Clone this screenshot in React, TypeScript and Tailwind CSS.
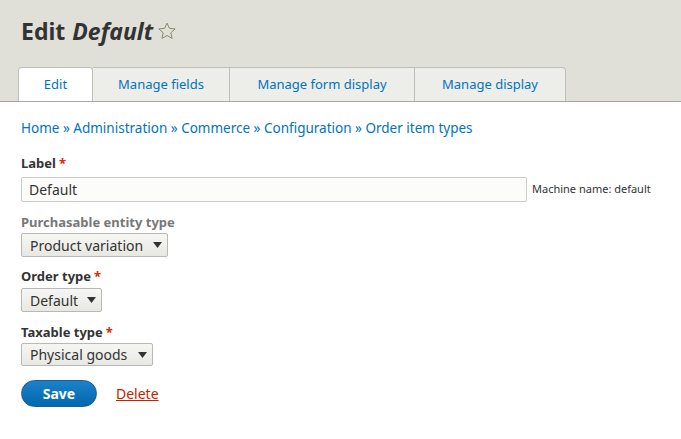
import React from "react";

const font = { fontFamily: '"Noto Sans", "Open Sans", sans-serif' };

function Req() {
  return <span className="text-[#e32700] ml-[3px]">*</span>;
}

function Select({ value, w, h }: { value: string; w: string; h: string }) {
  return (
    <div
      className={`${w} ${h} flex items-center justify-between pl-[8px] pr-[5px] border border-[#b8b8b8] rounded-[2px] bg-gradient-to-b from-[#f6f6f3] to-[#e8e8e3] text-[14px] text-[#333]`}
    >
      <span>{value}</span>
      <svg width="9" height="6" viewBox="0 0 9 6">
        <path d="M0 0h9L4.5 6z" fill="#333" />
      </svg>
    </div>
  );
}

export default function App() {
  return (
    <div className="w-[681px] h-[439px] bg-white text-[#333]" style={font}>
      <div className="bg-[#e0e0d8] pt-[16px] border-b border-[#a6a6a6]">
        <h1 className="pl-[21px] text-[23px] font-bold text-[#333] leading-[30px] flex items-center">
          Edit <em className="ml-[7px]">Default</em>
          <svg width="20" height="20" viewBox="0 0 24 24" className="ml-[4px]">
            <path
              d="M12 2.5l2.9 6.3 6.9.7-5.2 4.6 1.5 6.8L12 17.4l-6.1 3.5 1.5-6.8-5.2-4.6 6.9-.7z"
              fill="none"
              stroke="#8a8a6a"
              strokeWidth="1.2"
              strokeLinejoin="round"
            />
          </svg>
        </h1>
        <div className="flex pl-[18px] mt-[21px] text-[13px]">
          <div className="w-[75px] h-[34px] -mb-px bg-white border border-b-0 border-[#bfbfba] rounded-t-[4px] flex items-center justify-center text-[#0074bd]">
            Edit
          </div>
          <div className="w-[137px] h-[34px] bg-[#ededea] border-r border-t border-[#bfbfba] flex items-center justify-center text-[#0074bd]">
            Manage fields
          </div>
          <div className="w-[185px] h-[34px] bg-[#ededea] border-r border-t border-[#bfbfba] flex items-center justify-center text-[#0074bd]">
            Manage form display
          </div>
          <div className="w-[151px] h-[34px] bg-[#ededea] border-r border-t border-[#bfbfba] rounded-tr-[4px] flex items-center justify-center text-[#0074bd]">
            Manage display
          </div>
        </div>
      </div>

      <div className="px-[21px]">
        <div className="mt-[17px] text-[13.5px] text-[#0074bd] leading-[18px]">
          Home » Administration » Commerce » Configuration » Order item types
        </div>

        <div className="mt-[17px]">
          <div className="text-[13px] font-bold leading-[18px] mb-[5px]">
            Label<Req />
          </div>
          <div className="flex items-center">
            <div className="w-[506px] h-[25px] border border-[#ccc] bg-[#fcfcfa] rounded-[2px] flex items-center pl-[7px] text-[14px] text-[#333]">
              Default
            </div>
            <span className="ml-[5px] text-[11px] text-[#333]">Machine name: default</span>
          </div>
        </div>

        <div className="mt-[11px]">
          <div className="text-[13px] font-bold leading-[18px] text-[#777] mb-[2px]">
            Purchasable entity type
          </div>
          <Select value="Product variation" w="w-[147px]" h="h-[24px]" />
        </div>

        <div className="mt-[10px]">
          <div className="text-[13px] font-bold leading-[18px] mb-[3px]">
            Order type<Req />
          </div>
          <Select value="Default" w="w-[81px]" h="h-[24px]" />
        </div>

        <div className="mt-[11px]">
          <div className="text-[13px] font-bold leading-[18px] mb-[2px]">
            Taxable type<Req />
          </div>
          <Select value="Physical goods" w="w-[132px]" h="h-[23px]" />
        </div>

        <div className="mt-[14px] flex items-center">
          <button className="w-[76px] h-[27px] rounded-full bg-gradient-to-b from-[#1a82c8] to-[#0068b0] border border-[#1e5c90] text-white font-bold text-[14px]">
            Save
          </button>
          <a className="ml-[19px] text-[#c72100] underline text-[14px]">Delete</a>
        </div>
      </div>
    </div>
  );
}
